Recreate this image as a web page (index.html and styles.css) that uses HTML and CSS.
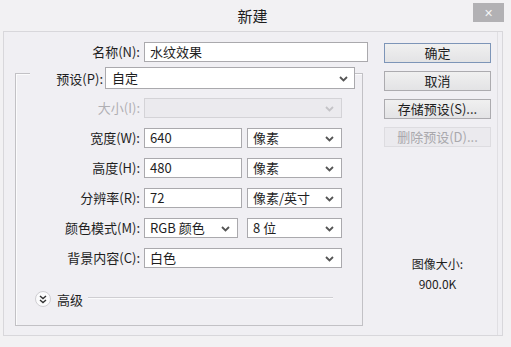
FILE: index.html
```html
<!DOCTYPE html>
<html lang="zh-CN">
<head>
  <meta charset="UTF-8">
  <title>新建</title>
  <link rel="stylesheet" href="styles.css">
</head>
<body>
  <div class="window">
    <div class="titlebar">
      <span></span>
      <span class="title">新建</span>
      <span class="close">✕</span>
    </div>

    <div class="panel">
      <div class="form">
        <div class="row name-row">
          <label>名称(N):</label>
          <div class="field full-name">水纹效果</div>
        </div>

        <div class="group">
          <div class="preset-row">
            <label>预设(P):</label>
            <div class="field select preset">自定
              <svg class="chev" width="9" height="6" viewBox="0 0 9 6"><polyline points="1,1 4.5,4.5 8,1"/></svg>
            </div>
          </div>

          <div class="row first">
            <label class="off">大小(I):</label>
            <div class="field select wide disabled">
              <svg class="chev" width="9" height="6" viewBox="0 0 9 6"><polyline points="1,1 4.5,4.5 8,1"/></svg>
            </div>
          </div>
          <div class="row">
            <label>宽度(W):</label>
            <div class="field num">640</div>
            <div class="field select unit">像素
              <svg class="chev" width="9" height="6" viewBox="0 0 9 6"><polyline points="1,1 4.5,4.5 8,1"/></svg>
            </div>
          </div>
          <div class="row">
            <label>高度(H):</label>
            <div class="field num">480</div>
            <div class="field select unit">像素
              <svg class="chev" width="9" height="6" viewBox="0 0 9 6"><polyline points="1,1 4.5,4.5 8,1"/></svg>
            </div>
          </div>
          <div class="row">
            <label>分辨率(R):</label>
            <div class="field num">72</div>
            <div class="field select unit">像素/英寸
              <svg class="chev" width="9" height="6" viewBox="0 0 9 6"><polyline points="1,1 4.5,4.5 8,1"/></svg>
            </div>
          </div>
          <div class="row">
            <label>颜色模式(M):</label>
            <div class="field select mode">RGB 颜色
              <svg class="chev" width="9" height="6" viewBox="0 0 9 6"><polyline points="1,1 4.5,4.5 8,1"/></svg>
            </div>
            <div class="field select unit bits">8 位
              <svg class="chev" width="9" height="6" viewBox="0 0 9 6"><polyline points="1,1 4.5,4.5 8,1"/></svg>
            </div>
          </div>
          <div class="row">
            <label>背景内容(C):</label>
            <div class="field select wide">白色
              <svg class="chev" width="9" height="6" viewBox="0 0 9 6"><polyline points="1,1 4.5,4.5 8,1"/></svg>
            </div>
          </div>

          <div class="advanced">
            <span class="toggle">
              <svg width="8" height="9" viewBox="0 0 8 9"><polyline points="1,1 4,3.5 7,1"/><polyline points="1,5 4,7.5 7,5"/></svg>
            </span>
            <span class="adv-label">高级</span>
            <span class="rule"></span>
          </div>
        </div>
      </div>

      <div class="side">
        <div class="btn default">确定</div>
        <div class="btn">取消</div>
        <div class="btn">存储预设(S)...</div>
        <div class="btn disabled">删除预设(D)...</div>
        <div class="info">
          <div>图像大小:</div>
          <div>900.0K</div>
        </div>
      </div>
    </div>
  </div>
</body>
</html>
```

FILE: styles.css
```css
* { box-sizing: border-box; }
body {
  margin: 0;
  font-family: "Noto Sans CJK SC", "Noto Sans", sans-serif;
  font-size: 13px;
  color: #1e1e1e;
  background: #f2f1f3;
}
.window {
  width: 511px;
  height: 347px;
  background: #f2f1f3;
}
.titlebar {
  height: 31px;
  display: grid;
  grid-template-columns: 1fr auto 1fr;
  align-items: start;
}
.title {
  font-size: 15px;
  line-height: 15px;
  margin-top: 8px;
  margin-right: 6px;
}
.close {
  justify-self: end;
  width: 31px;
  height: 19px;
  margin: 3px 7px 0 0;
  background: #b2b1b4;
  color: #f4f4f4;
  font-size: 11px;
  line-height: 19px;
  text-align: center;
}
.panel {
  margin-left: 3px;
  width: 500px;
  height: 305px;
  border: 1px solid #d8d7db;
  background: #f0eff3;
  display: flex;
  box-shadow: inset -4px 0 0 #f0eff3, inset -5px 0 0 #e0dfe3;
}
.form {
  width: 380px;
  padding-top: 10px;
}
.row {
  display: flex;
  align-items: center;
  height: 20px;
  margin-top: 10px;
}
.row label {
  width: 124px;
  text-align: right;
  margin-right: 4px;
  line-height: 20px;
}
.row label.off { color: #b0afb3; }
.name-row { margin-top: 0; }
.name-row label { width: 136px; }
.field {
  height: 20px;
  border: 1px solid #aaa9ad;
  background: #fff;
  line-height: 18px;
  padding-left: 5px;
  position: relative;
  white-space: nowrap;
}
.full-name { width: 224px; }
.select .chev {
  position: absolute;
  right: 7px;
  top: 7px;
}
.chev polyline {
  fill: none;
  stroke: #555;
  stroke-width: 1.8;
}
.disabled .chev polyline { stroke: #c4c3c7; }
.field.disabled {
  background: #ebeaee;
  border-color: #d4d3d7;
}
.wide { width: 198px; }
.num { width: 98px; margin-right: 5px; }
.unit { width: 95px; }
.mode { width: 94px; margin-right: 9px; }
.group {
  margin: 11px 0 0 11px;
  width: 348px;
  height: 253px;
  border: 1px solid #c2c1c5;
  box-shadow: inset 1px 1px 0 #fbfbfc;
}
.preset-row {
  display: flex;
  align-items: center;
  height: 22px;
  margin: -7px 7px 0 14px;
  background: #f0eff3;
}
.preset-row label {
  flex: 1;
  text-align: right;
  padding-right: 2px;
}
.preset {
  width: 250px;
  height: 22px;
  line-height: 20px;
  padding-left: 6px;
}
.preset .chev { top: 8px; right: 6px; }
.row.first { margin-top: 9px; }
.advanced {
  display: flex;
  align-items: center;
  height: 16px;
  margin: 23px 29px 0 19px;
}
.toggle {
  width: 16px;
  height: 16px;
  border-radius: 50%;
  border: 1px solid #cfced2;
  background: #fbfbfc;
  display: flex;
  align-items: center;
  justify-content: center;
  margin-right: 6px;
}
.toggle polyline {
  fill: none;
  stroke: #333;
  stroke-width: 1.4;
}
.adv-label { margin-right: 5px; }
.rule {
  flex: 1;
  height: 2px;
  border-top: 1px solid #cfced2;
  border-bottom: 1px solid #fbfbfc;
  margin-top: -3px;
}
.side {
  width: 107px;
  padding-top: 11px;
}
.btn {
  height: 20px;
  margin-bottom: 8px;
  border: 1px solid #acabaf;
  background: linear-gradient(#f0f0f0, #e3e3e5);
  text-align: center;
  line-height: 18px;
  font-size: 13px;
}
.btn.default { border-color: #7d95b8; }
.btn.disabled {
  border-color: #dddce0;
  background: #ebeaee;
  color: #a9a8ac;
}
.info {
  margin-top: 107px;
  text-align: center;
  line-height: 20px;
  font-size: 12px;
}
```
